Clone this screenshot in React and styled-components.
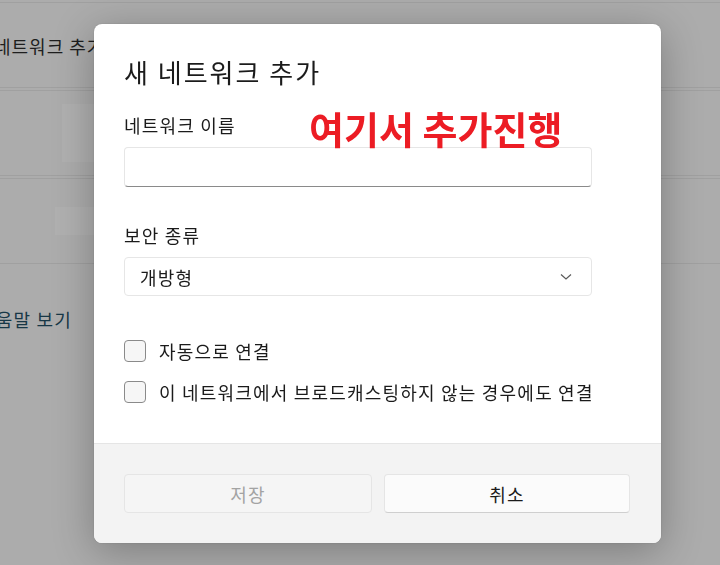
import React from "react";
import styled, { createGlobalStyle } from "styled-components";

const Global = createGlobalStyle`
  html, body {
    margin: 0;
    padding: 0;
    background: #acacac;
    overflow: hidden;
  }
  body {
    font-family: "Noto Sans CJK KR", "Noto Sans", sans-serif;
  }
`;

const Page = styled.div`
  width: 720px;
  height: 565px;
  overflow: hidden;
  padding-top: 2px;
  box-sizing: border-box;
`;

const BgRow = styled.div`
  height: ${(p) => p.$h}px;
  border-top: 1px solid #a0a0a0;
  border-bottom: ${(p) => (p.$double ? "1px solid #a0a0a0" : "none")};
  margin-bottom: ${(p) => (p.$double ? 2 : 0)}px;
  display: flex;
  align-items: center;
  justify-content: flex-end;
  padding-right: 626px;
  position: relative;
`;

const BgTitle = styled.div`
  position: absolute;
  left: -6px;
  top: 30px;
  font-size: 18px;
  letter-spacing: 1px;
  color: #1e1e1e;
`;

const BgBox = styled.div`
  width: ${(p) => p.$w}px;
  height: ${(p) => p.$bh}px;
  background: #b0b0b0;
`;

const BgLink = styled.div`
  margin: 42px 0 0 -22px;
  font-size: 18px;
  letter-spacing: 1.2px;
  color: #173746;
`;

const Dialog = styled.div`
  position: fixed;
  left: 94px;
  top: 24px;
  width: 567px;
  height: 519px;
  background: #ffffff;
  border-radius: 8px;
  box-shadow: 0 8px 40px rgba(0, 0, 0, 0.28), 0 0 2px rgba(0, 0, 0, 0.15);
  display: flex;
  flex-direction: column;
  overflow: hidden;
`;

const Body = styled.div`
  flex: 1;
  padding: 30px 0 0 30px;
  position: relative;
`;

const Title = styled.h1`
  margin: 0;
  font-size: 26px;
  line-height: 36px;
  letter-spacing: 2px;
  font-weight: 400;
  color: #1b1b1b;
`;

const Label = styled.div`
  margin-top: ${(p) => p.$top}px;
  font-size: 18px;
  line-height: 24px;
  letter-spacing: 1.2px;
  color: #1b1b1b;
`;

const TextInput = styled.div`
  margin-top: 10px;
  width: 468px;
  height: 40px;
  box-sizing: border-box;
  border: 1px solid #e6e6e6;
  border-bottom: 1px solid #8a8a8a;
  border-radius: 4px;
  background: #ffffff;
`;

const Select = styled.div`
  margin-top: 10px;
  width: 468px;
  height: 39px;
  box-sizing: border-box;
  border: 1px solid #e6e6e6;
  border-radius: 4px;
  background: #ffffff;
  display: flex;
  align-items: center;
  justify-content: space-between;
  padding: 0 19px 0 15px;
  font-size: 18px;
  letter-spacing: 1.2px;
  color: #1b1b1b;
`;

const CheckRow = styled.label`
  margin-top: ${(p) => p.$top}px;
  display: flex;
  align-items: center;
  gap: 13px;
  height: 32px;
  font-size: 18px;
  letter-spacing: 1.2px;
  color: #1b1b1b;
`;

const Box = styled.span`
  width: 22px;
  height: 22px;
  box-sizing: border-box;
  border: 1px solid #8a8a8a;
  border-radius: 4px;
  background: #f6f6f6;
`;

const Note = styled.div`
  position: absolute;
  left: 215px;
  top: 82px;
  font-size: 38px;
  font-weight: 700;
  color: #ec1c24;
  line-height: 44px;
`;

const Footer = styled.div`
  height: 100px;
  border-top: 1px solid #e5e5e5;
  background: #f3f3f3;
  display: grid;
  grid-template-columns: 248px 246px;
  gap: 12px;
  padding: 30px 0 0 30px;
  box-sizing: border-box;
`;

const Button = styled.button`
  height: 39px;
  border-radius: 4px;
  font-family: inherit;
  font-size: 18px;
  letter-spacing: 1.2px;
  border: 1px solid #e5e5e5;
  border-bottom-color: ${(p) => (p.disabled ? "#e5e5e5" : "#cfcfcf")};
  background: ${(p) => (p.disabled ? "#f5f5f5" : "#fbfbfb")};
  color: ${(p) => (p.disabled ? "#a3a3a3" : "#1b1b1b")};
`;

const Chevron = () => (
  <svg width="12" height="8" viewBox="0 0 12 8">
    <path d="M1 1.5 L6 6 L11 1.5" fill="none" stroke="#5a5a5a" strokeWidth="1.2" />
  </svg>
);

export default function App() {
  return (
    <>
      <Global />
      <Page>
        <BgRow $h={84} $double>
          <BgTitle>네트워크 추가</BgTitle>
        </BgRow>
        <BgRow $h={84} $double>
          <BgBox $w={32} $bh={58} />
        </BgRow>
        <BgRow $h={84}>
          <BgBox $w={39} $bh={28} />
        </BgRow>
        <BgRow $h={0} />
        <BgLink>도움말 보기</BgLink>
      </Page>
      <Dialog>
        <Body>
          <Title>새 네트워크 추가</Title>
          <Label $top={23}>네트워크 이름</Label>
          <TextInput />
          <Label $top={36}>보안 종류</Label>
          <Select>
            <span>개방형</span>
            <Chevron />
          </Select>
          <CheckRow $top={39}>
            <Box />
            자동으로 연결
          </CheckRow>
          <CheckRow $top={9}>
            <Box />
            이 네트워크에서 브로드캐스팅하지 않는 경우에도 연결
          </CheckRow>
          <Note>여기서 추가진행</Note>
        </Body>
        <Footer>
          <Button disabled>저장</Button>
          <Button>취소</Button>
        </Footer>
      </Dialog>
    </>
  );
}
